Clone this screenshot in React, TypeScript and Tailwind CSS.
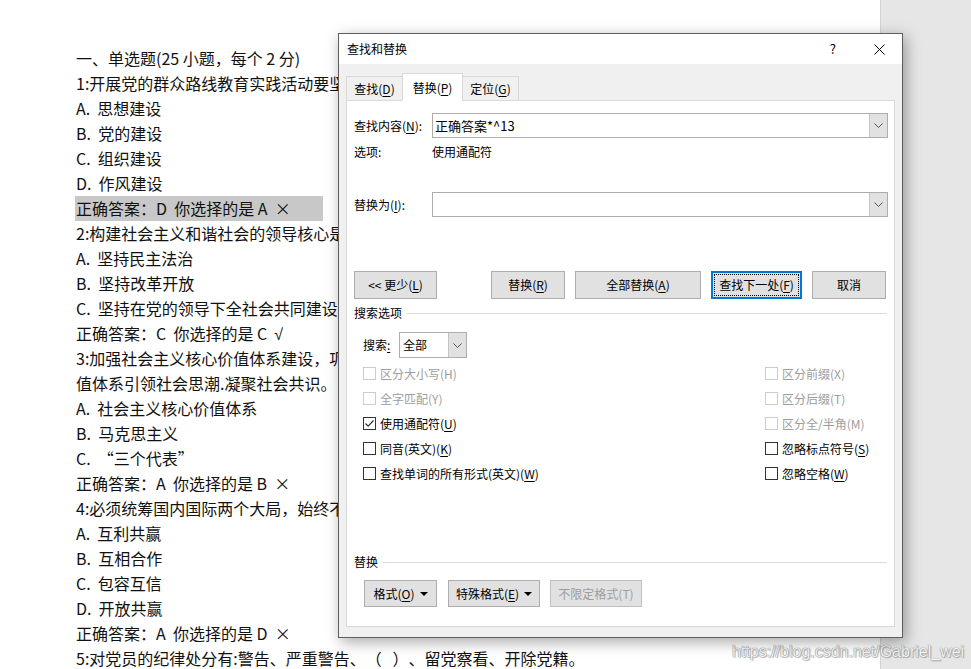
import React from "react";

const U = ({ children }: { children: React.ReactNode }) => (
  <span className="underline underline-offset-[2px] decoration-[1px]">{children}</span>
);

const Tick = () => (
  <span className="text-[16px]" style={{ fontFamily: '"Liberation Sans", Arial, sans-serif' }}>
    √
  </span>
);

const docLines: React.ReactNode[] = [
  "一、单选题(25 小题，每个 2 分)",
  "1:开展党的群众路线教育实践活动要坚持以为民务实清廉为主要内容。",
  "A.  思想建设",
  "B.  党的建设",
  "C.  组织建设",
  "D.  作风建设",
  "__HL__",
  "2:构建社会主义和谐社会的领导核心是中国共产党。",
  "A.  坚持民主法治",
  "B.  坚持改革开放",
  "C.  坚持在党的领导下全社会共同建设",
  <>
    正确答案：C  你选择的是 C  <Tick />
  </>,
  "3:加强社会主义核心价值体系建设，巩固马克思主义指导地位，坚持用社会主义核心价",
  "值体系引领社会思潮.凝聚社会共识。",
  "A.  社会主义核心价值体系",
  "B.  马克思主义",
  "C.  “三个代表”",
  "正确答案：A  你选择的是 B  ×",
  "4:必须统筹国内国际两个大局，始终不渝走和平发展道路、奉行互利共赢的开放战略。",
  "A.  互利共赢",
  "B.  互相合作",
  "C.  包容互信",
  "D.  开放共赢",
  "正确答案：A  你选择的是 D  ×",
  "5:对党员的纪律处分有:警告、严重警告、（   ）、留党察看、开除党籍。",
];

const Chevron = () => (
  <svg width="9" height="5" viewBox="0 0 9 5" className="block">
    <path d="M0.5 0.5 L4.5 4.5 L8.5 0.5" fill="none" stroke="#555" strokeWidth="1" />
  </svg>
);

const Tri = () => (
  <svg width="8" height="4" viewBox="0 0 8 4" className="ml-[5px] block">
    <path d="M0 0 L8 0 L4 4 Z" fill="#000" />
  </svg>
);

const Btn = ({
  children,
  w,
  className = "",
}: {
  children: React.ReactNode;
  w: string;
  className?: string;
}) => (
  <div
    className={`h-[28px] ${w} border border-[#adadad] bg-[#e1e1e1] flex items-center justify-center text-[12px] text-black ${className}`}
  >
    {children}
  </div>
);

const Check = ({
  label,
  disabled,
  checked,
}: {
  label: React.ReactNode;
  disabled?: boolean;
  checked?: boolean;
}) => (
  <div className="h-[25px] flex items-center">
    <div
      className={`w-[13px] h-[13px] border bg-white flex items-center justify-center ${
        disabled ? "border-[#cccccc]" : "border-[#333333]"
      }`}
    >
      {checked && (
        <svg width="11" height="11" viewBox="0 0 11 11">
          <path d="M1.5 5.5 L4.2 8.2 L9.5 2.5" fill="none" stroke="#333" strokeWidth="1.2" />
        </svg>
      )}
    </div>
    <span
      className={`ml-[4px] text-[12px] leading-none ${disabled ? "text-[#9d9d9d]" : "text-black"}`}
    >
      {label}
    </span>
  </div>
);

export default function App() {
  return (
    <div
      className="relative w-[971px] h-[669px] overflow-hidden flex bg-white [text-spacing-trim:space-all]"
      style={{ fontFamily: '"Noto Sans CJK SC", "Noto Sans", sans-serif' }}
    >
      {/* document page */}
      <div className="w-[880px] h-full bg-white pl-[76px] pt-[46px] overflow-hidden">
        {docLines.map((l, i) =>
          l === "__HL__" ? (
            <div key={i} className="h-[25px] leading-[25px] text-[16px] text-[#111] whitespace-pre">
              <span className="inline-block -ml-px pl-px w-[248px] bg-[#c8c8c8]">
                正确答案：D  你选择的是 A  ×
              </span>
            </div>
          ) : (
            <div key={i} className="h-[25px] leading-[25px] text-[16px] text-[#111] whitespace-pre">
              {l}
            </div>
          )
        )}
      </div>
      <div className="flex-1 h-full bg-[#e6e6e6] border-l border-[#d4d4d4]" />

      {/* watermark */}
      <div
        className="absolute left-[732px] top-[640px] text-[16px] text-[#f4f4f4] whitespace-nowrap"
        style={{
          fontFamily: '"Liberation Sans", Arial, sans-serif',
          textShadow:
            "0 0 1px #8a8a8a, 0 0 1px #8a8a8a, 1px 1px 1px rgba(0,0,0,0.25)",
        }}
      >
        https://blog.csdn.net/Gabriel_wei
      </div>

      {/* dialog window */}
      <div className="absolute left-[338px] top-[33px] w-[565px] h-[605px] border border-[#5e5e5e] bg-[#f0f0f0] flex flex-col shadow-[3px_4px_14px_rgba(0,0,0,0.35)]">
        {/* title bar */}
        <div className="h-[30px] bg-white flex items-center pl-[8px] text-[12px] text-black">
          <span>查找和替换</span>
          <span className="ml-auto mr-[38px] text-[13px]">?</span>
          <svg width="11" height="11" viewBox="0 0 11 11" className="mr-[17px]">
            <path d="M0.5 0.5 L10.5 10.5 M10.5 0.5 L0.5 10.5" stroke="#000" strokeWidth="1" />
          </svg>
        </div>

        {/* body */}
        <div className="flex-1 flex flex-col px-[7px] pt-[9px] pb-[10px]">
          {/* tabs */}
          <div className="flex items-end h-[28px] relative z-10 -mb-px">
            <div className="w-[57px] h-[25px] border border-[#d9d9d9] bg-[#f0f0f0] flex items-center justify-center text-[12px]">
              查找(<U>D</U>)
            </div>
            <div className="-ml-px w-[61px] h-[28px] border border-[#d9d9d9] border-b-white bg-white flex items-center justify-center text-[12px] pt-[1px]">
              替换(<U>P</U>)
            </div>
            <div className="-ml-px w-[57px] h-[25px] border border-[#d9d9d9] bg-[#f0f0f0] flex items-center justify-center text-[12px]">
              定位(<U>G</U>)
            </div>
          </div>

          {/* panel */}
          <div className="flex-1 bg-white border border-[#d9d9d9] pl-[7px] pr-[6px] flex flex-col text-[12px] text-black">
            {/* find */}
            <div className="mt-[12px] flex items-center h-[25px]">
              <div className="w-[78px]">
                查找内容(<U>N</U>):
              </div>
              <div className="flex-1 h-[25px] border border-[#adadad] flex">
                <div className="flex-1 flex items-center pl-[2px] text-[13px]">正确答案*^13</div>
                <div className="w-[18px] h-full bg-[#e1e1e1] border-l border-[#c4c4c4] flex items-center justify-center">
                  <Chevron />
                </div>
              </div>
            </div>
            {/* options */}
            <div className="mt-[6px] h-[16px] flex items-center">
              <div className="w-[78px]">选项:</div>
              <div>使用通配符</div>
            </div>
            {/* replace */}
            <div className="mt-[32px] flex items-center h-[25px]">
              <div className="w-[78px]">
                替换为(<U>I</U>):
              </div>
              <div className="flex-1 h-[25px] border border-[#adadad] flex">
                <div className="flex-1" />
                <div className="w-[18px] h-full bg-[#e1e1e1] border-l border-[#c4c4c4] flex items-center justify-center">
                  <Chevron />
                </div>
              </div>
            </div>
            {/* buttons */}
            <div className="mt-[54px] flex">
              <Btn w="w-[83px]">
                &lt;&lt; 更少(<U>L</U>)
              </Btn>
              <Btn w="w-[74px]" className="ml-[54px]">
                替换(<U>R</U>)
              </Btn>
              <Btn w="w-[126px]" className="ml-[10px]">
                全部替换(<U>A</U>)
              </Btn>
              <div className="ml-[10px] w-[91px] h-[28px] border-2 border-[#0078d7] bg-[#e1e1e1] p-[1px]">
                <div className="w-full h-full border border-dotted border-black flex items-center justify-center">
                  查找下一处(<U>F</U>)
                </div>
              </div>
              <Btn w="w-[74px]" className="ml-[10px]">
                取消
              </Btn>
            </div>
            {/* search options header */}
            <div className="mt-[6px] h-[16px] flex items-center">
              <span>搜索选项</span>
              <div className="flex-1 ml-[4px] mr-[1px] border-t border-[#dcdcdc]" />
            </div>
            {/* search select */}
            <div className="mt-[11px] ml-[9px] flex items-center h-[26px]">
              <span className="w-[36px]">
                搜索<U>:</U>
              </span>
              <div className="w-[68px] h-[26px] border border-[#adadad] flex">
                <div className="flex-1 flex items-center pl-[3px]">全部</div>
                <div className="w-[18px] h-full bg-[#e1e1e1] border-l border-[#c4c4c4] flex items-center justify-center">
                  <Chevron />
                </div>
              </div>
            </div>
            {/* checkboxes */}
            <div className="mt-[3px] ml-[9px] flex">
              <div className="w-[402px] flex flex-col">
                <Check label="区分大小写(H)" disabled />
                <Check label="全字匹配(Y)" disabled />
                <Check
                  label={
                    <>
                      使用通配符(<U>U</U>)
                    </>
                  }
                  checked
                />
                <Check
                  label={
                    <>
                      同音(英文)(<U>K</U>)
                    </>
                  }
                />
                <Check
                  label={
                    <>
                      查找单词的所有形式(英文)(<U>W</U>)
                    </>
                  }
                />
              </div>
              <div className="flex flex-col">
                <Check label="区分前缀(X)" disabled />
                <Check label="区分后缀(T)" disabled />
                <Check label="区分全/半角(M)" disabled />
                <Check
                  label={
                    <>
                      忽略标点符号(<U>S</U>)
                    </>
                  }
                />
                <Check
                  label={
                    <>
                      忽略空格(<U>W</U>)
                    </>
                  }
                />
              </div>
            </div>
            {/* replace section */}
            <div className="mt-[68px] h-[16px] flex items-center">
              <span>替换</span>
              <div className="flex-1 ml-[5px] mr-[1px] border-t border-[#dcdcdc]" />
            </div>
            <div className="mt-[10px] ml-[10px] flex">
              <div className="h-[27px] w-[73px] border border-[#adadad] bg-[#e1e1e1] flex items-center justify-center">
                格式(<U>O</U>)
                <Tri />
              </div>
              <div className="ml-[11px] h-[27px] w-[92px] border border-[#adadad] bg-[#e1e1e1] flex items-center justify-center">
                特殊格式(<U>E</U>)
                <Tri />
              </div>
              <div className="ml-[10px] h-[27px] w-[92px] border border-[#bfbfbf] bg-[#e1e1e1] flex items-center justify-center text-[#9d9d9d]">
                不限定格式(T)
              </div>
            </div>
          </div>
        </div>
      </div>
    </div>
  );
}
